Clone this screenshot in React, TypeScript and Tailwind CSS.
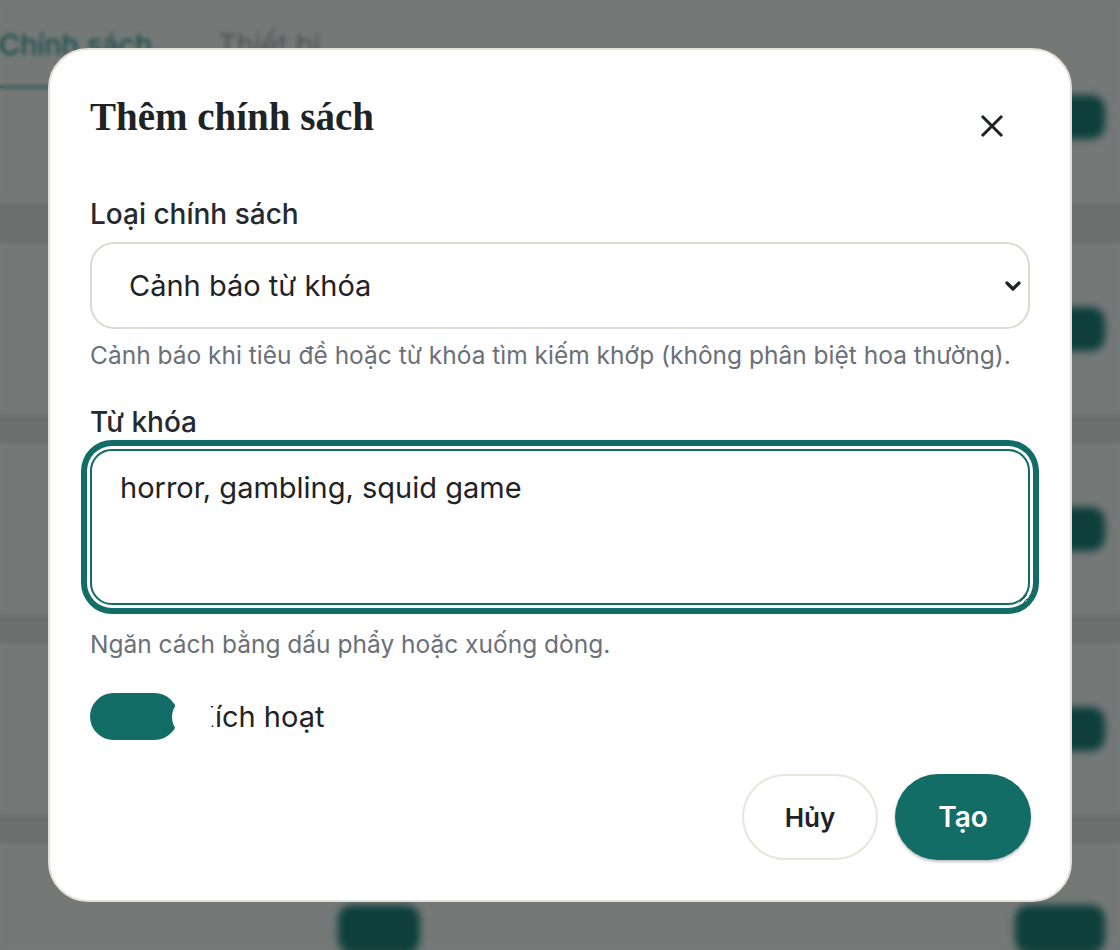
import React, { useState } from 'react';

const TEAL = 'bg-[#136d67]';

const PolicyCard: React.FC<{ children?: React.ReactNode }> = ({ children }) => (
  <div className="h-[172px] shrink-0 bg-[#e9f2f0] flex items-center justify-end pr-[15px]">{children}</div>
);

const Gap: React.FC<{ h: string }> = ({ h }) => <div className={`${h} shrink-0`} />;

const GhostButton: React.FC = () => (
  <div className="w-[120px] h-[44px] rounded-[14px] bg-[#1c7e78] blur-[3px]" />
);

const Page: React.FC = () => (
  <div className="w-full h-[950px] bg-[#d6dedb] flex flex-col overflow-hidden font-['Inter',sans-serif]">
    <div className="h-[88px] shrink-0 bg-[#e9f2f0] flex items-end gap-[66px]">
      <div className="pt-[28px] pb-[24px] border-b-2 border-[#1a8f84] text-[29px] leading-[34px] text-[#1c948a] -ml-[1px]">
        Chính sách
      </div>
      <div className="pt-[28px] pb-[26px] text-[29px] leading-[34px] text-[#9ea8a6]">Thiết bị</div>
    </div>
    <div className="h-[115px] shrink-0 bg-[#e9f2f0] flex items-start justify-end pr-[15px] pt-[7px]">
      <GhostButton />
    </div>
    <Gap h="h-[40px]" />
    <PolicyCard>
      <GhostButton />
    </PolicyCard>
    <Gap h="h-[28px]" />
    <PolicyCard>
      <GhostButton />
    </PolicyCard>
    <Gap h="h-[28px]" />
    <PolicyCard>
      <GhostButton />
    </PolicyCard>
    <Gap h="h-[28px]" />
    <div className="h-[172px] shrink-0 bg-[#e9f2f0] flex items-start pt-[62px] pr-[15px]">
      <div className="ml-[338px] w-[82px] h-[48px] rounded-[14px] bg-[#1c7e78] blur-[3px]" />
      <div className="ml-auto w-[90px] h-[48px] rounded-[14px] bg-[#1c7e78] blur-[3px]" />
    </div>
  </div>
);

export default function App() {
  const [keywords, setKeywords] = useState('horror, gambling, squid game');
  const [enabled, setEnabled] = useState(true);

  return (
    <div className="relative w-full h-[950px] overflow-hidden">
      <Page />
      <div className="absolute inset-0 bg-black/50 backdrop-blur-[2px] flex items-center justify-center p-12">
        <div className="w-full h-full rounded-[40px] border-2 border-[#e4e2d8] bg-white px-10 pt-10 pb-10 flex flex-col font-['Inter',sans-serif] text-[#1f2326]">
          <div className="flex items-start justify-between">
            <h2 className="mt-[3px] font-['Liberation_Serif',serif] text-[39px] leading-[48px] font-bold text-[#1f2326]">
              Thêm chính sách
            </h2>
            <button className="mt-[12px] mr-[14px] w-[48px] h-[48px] flex items-center justify-center text-[#1f2326]">
              <svg width="24" height="24" viewBox="0 0 24 24" fill="none" stroke="currentColor" strokeWidth="3" strokeLinecap="square">
                <path d="M3 3 L21 21 M21 3 L3 21" />
              </svg>
            </button>
          </div>

          <label className="mt-[48px] text-[28px] leading-[32px] font-medium text-[#262a2e]">Loại chính sách</label>
          <div className="relative mt-3">
            <select className="appearance-none w-full h-[87px] rounded-[24px] border-2 border-[#dddbd0] bg-white pl-[37px] text-[29px] text-[#1f2326] outline-none">
              <option>Cảnh báo từ khóa</option>
              <option>Chặn từ khóa</option>
            </select>
            <svg className="absolute right-[8px] top-1/2 -translate-y-1/2 pointer-events-none" width="18" height="12" viewBox="0 0 18 12" fill="none" stroke="#1f2326" strokeWidth="3.2" strokeLinecap="round" strokeLinejoin="round">
              <path d="M3 3 L9 9 L15 3" />
            </svg>
          </div>
          <p className="mt-3 text-[24.5px] leading-[28px] text-[#6b7078] whitespace-nowrap">
            Cảnh báo khi tiêu đề hoặc từ khóa tìm kiếm khớp (không phân biệt hoa thường).
          </p>

          <label className="mt-[37px] text-[28px] leading-[32px] font-medium text-[#262a2e]">Từ khóa</label>
          <textarea
            value={keywords}
            onChange={(e) => setKeywords(e.target.value)}
            className="mt-[11px] h-[157px] rounded-[22px] border-2 border-[#136d67] ring-[6px] ring-[#136d67] ring-offset-[3px] ring-offset-white px-[28px] pt-[19px] text-[29px] leading-[36px] text-[#1f2326] outline-none resize-y"
          />
          <p className="mt-[25px] text-[24.5px] leading-[28px] text-[#6b7078]">Ngăn cách bằng dấu phẩy hoặc xuống dòng.</p>

          <div className="mt-[35px] flex items-center gap-[17px]">
            <button
              onClick={() => setEnabled(!enabled)}
              className={`relative w-[88px] h-[47px] rounded-full ${enabled ? TEAL : 'bg-gray-300'}`}
            >
              <span className="absolute left-[82px] top-[2.5px] w-[42px] h-[42px] rounded-full bg-white" />
            </button>
            <span className="text-[29px] leading-[34px] text-[#1f2326]">Kích hoạt</span>
          </div>

          <div className="mt-[34px] flex justify-end gap-[17px] mr-[-1px]">
            <button className="w-[136px] h-[86px] rounded-full border-2 border-[#e9e5da] bg-white text-[26px] font-semibold text-[#1f2326]">
              Hủy
            </button>
            <button className="w-[136px] h-[86px] rounded-full bg-[#136d67] text-[28px] font-semibold text-white shadow-[0_2px_3px_rgba(0,0,0,0.25)]">
              Tạo
            </button>
          </div>
        </div>
      </div>
    </div>
  );
}
